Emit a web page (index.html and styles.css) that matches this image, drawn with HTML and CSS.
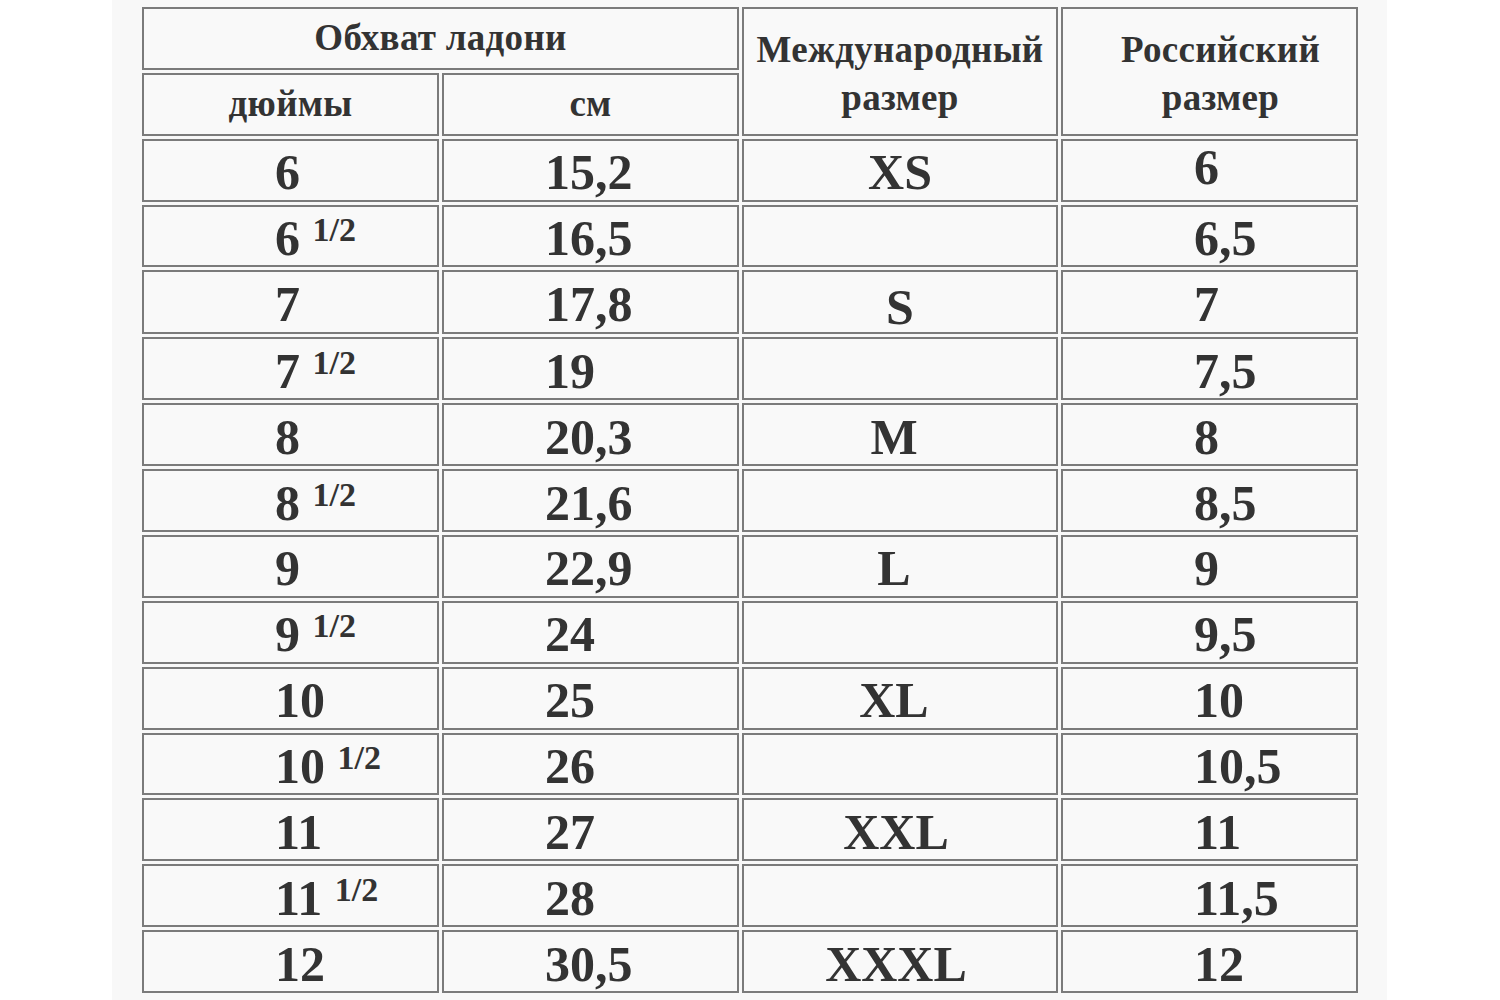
FILE: index.html
```html
<!DOCTYPE html>
<html lang="ru">
<head>
<meta charset="utf-8">
<title>Размеры перчаток</title>
<link rel="stylesheet" href="styles.css">
</head>
<body>
<div class="panel">
  <table class="sizes">
    <colgroup>
      <col class="c1"><col class="c2"><col class="c3"><col class="c4">
    </colgroup>
    <thead>
      <tr>
        <th colspan="2" class="head">Обхват ладони</th>
        <th rowspan="2" class="head two">Международный<br>размер</th>
        <th rowspan="2" class="head two ru-head">Российский<br>размер</th>
      </tr>
      <tr>
        <th class="head">дюймы</th>
        <th class="head">см</th>
      </tr>
    </thead>
    <tbody>
      <tr><td class="in">6</td><td class="cm">15,2</td><td class="intl">XS</td><td class="ru ru-first">6</td></tr>
      <tr><td class="in">6 <sup>1/2</sup></td><td class="cm">16,5</td><td class="intl"></td><td class="ru">6,5</td></tr>
      <tr><td class="in">7</td><td class="cm">17,8</td><td class="intl intl-low">S</td><td class="ru">7</td></tr>
      <tr><td class="in">7 <sup>1/2</sup></td><td class="cm">19</td><td class="intl"></td><td class="ru">7,5</td></tr>
      <tr><td class="in">8</td><td class="cm">20,3</td><td class="intl shift-l">M</td><td class="ru">8</td></tr>
      <tr><td class="in">8 <sup>1/2</sup></td><td class="cm">21,6</td><td class="intl"></td><td class="ru">8,5</td></tr>
      <tr><td class="in">9</td><td class="cm">22,9</td><td class="intl shift-l">L</td><td class="ru">9</td></tr>
      <tr><td class="in">9 <sup>1/2</sup></td><td class="cm">24</td><td class="intl"></td><td class="ru">9,5</td></tr>
      <tr><td class="in">10</td><td class="cm">25</td><td class="intl shift-l">XL</td><td class="ru">10</td></tr>
      <tr><td class="in">10 <sup>1/2</sup></td><td class="cm">26</td><td class="intl"></td><td class="ru">10,5</td></tr>
      <tr><td class="in">11</td><td class="cm">27</td><td class="intl shift-m">XXL</td><td class="ru">11</td></tr>
      <tr><td class="in">11 <sup>1/2</sup></td><td class="cm">28</td><td class="intl"></td><td class="ru">11,5</td></tr>
      <tr><td class="in">12</td><td class="cm">30,5</td><td class="intl shift-m">XXXL</td><td class="ru">12</td></tr>
    </tbody>
  </table>
</div>
</body>
</html>
```

FILE: styles.css
```css
html, body {
  margin: 0;
  padding: 0;
  background: #ffffff;
}

body {
  font-family: "Liberation Serif", "Times New Roman", serif;
  color: #333333;
}

.panel {
  width: 1275px;
  height: 1000px;
  margin-left: 112px;
  padding: 4px 0 0 27px;
  box-sizing: border-box;
  background: #f8f8f8;
  overflow: hidden;
}

.sizes {
  border-collapse: separate;
  border-spacing: 3px;
  table-layout: fixed;
  width: 1222px;
}

.c1 { width: 297px; }
.c2 { width: 297px; }
.c3 { width: 316px; }
.c4 { width: 297px; }

.sizes th,
.sizes td {
  box-sizing: border-box;
  height: 62.87px;
  border: 2px solid #7b7b7b;
  background: #f9f9f9;
  padding: 0;
  vertical-align: middle;
  white-space: nowrap;
}

.head {
  font-size: 37px;
  font-weight: bold;
  text-align: center;
  line-height: 48px;
  letter-spacing: 0.3px;
}

.head.two {
  padding-top: 6px;
}

.head.ru-head {
  padding-left: 22px;
}

.sizes td {
  font-size: 50px;
  font-weight: bold;
  line-height: 50px;
  padding-top: 4px;
}

.in {
  text-align: left;
  padding-left: 131px !important;
}

.cm {
  text-align: left;
  padding-left: 101px !important;
}

.intl {
  text-align: center;
}

.intl-low {
  padding-top: 10px !important;
}

.shift-l {
  padding-right: 12px !important;
}

.shift-m {
  padding-right: 8px !important;
}

.ru {
  text-align: left;
  padding-left: 131px !important;
}

.ru-first {
  padding-top: 0 !important;
  padding-bottom: 6px !important;
}

.sizes sup {
  font-size: 34px;
  line-height: 0;
  vertical-align: 14px;
}
```
